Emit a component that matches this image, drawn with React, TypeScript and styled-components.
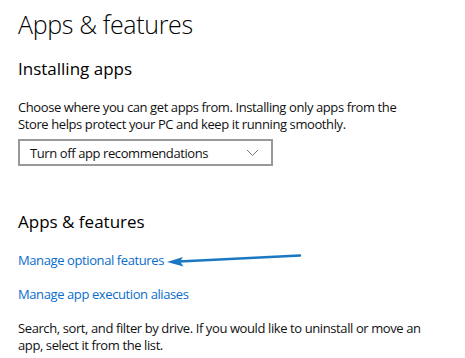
import styled, { createGlobalStyle } from "styled-components";

const GlobalStyle = createGlobalStyle`
    body {
        margin: 0;
        background: #ffffff;
        font-family: "Open Sans", "Noto Sans", sans-serif;
        color: #000000;
    }
`;

const Page = styled.div`
    position: relative;
    display: flex;
    flex-direction: column;
    align-items: flex-start;
    padding: 0 18px;
    width: 465px;
    height: 358px;
    box-sizing: border-box;
    overflow: hidden;
`;

const Title = styled.h1`
    margin: 8px 0 0;
    font-size: 25px;
    font-weight: 300;
    line-height: 32px;
    letter-spacing: -0.35px;
`;

const SectionTitle = styled.h2<{ $top: number }>`
    margin: ${({ $top }) => $top}px 0 0;
    font-size: 17px;
    font-weight: 400;
    line-height: 24px;
`;

const Text = styled.p<{ $top: number; $width: number }>`
    margin: ${({ $top }) => $top}px 0 0;
    font-size: 13px;
    line-height: 17px;
    letter-spacing: -0.4px;
    max-width: ${({ $width }) => $width}px;
    color: #111111;
`;

const Select = styled.div`
    display: flex;
    align-items: center;
    justify-content: space-between;
    margin-top: 6px;
    width: 255px;
    height: 27px;
    box-sizing: border-box;
    padding: 0 12px 0 10px;
    border: 2px solid #999999;
    font-size: 13px;
    letter-spacing: -0.4px;
    color: #111111;
`;

const LinkRow = styled.div<{ $top: number }>`
    position: relative;
    margin-top: ${({ $top }) => $top}px;
`;

const Link = styled.a`
    display: block;
    color: #0a6dcc;
    font-size: 13px;
    line-height: 17px;
    letter-spacing: -0.4px;
    text-decoration: none;
    cursor: pointer;
`;

const Arrow = styled.svg`
    position: absolute;
    left: 149px;
    top: 0;
`;

const Chevron = () => (
    <svg width="13" height="8" viewBox="0 0 13 8">
        <path d="M1 1 L6.5 6.5 L12 1" fill="none" stroke="#777" strokeWidth="1" />
    </svg>
);

const App = () => {
    return (
        <Page>
            <GlobalStyle />
            <Title>Apps &amp; features</Title>
            <SectionTitle $top={17}>Installing apps</SectionTitle>
            <Text $top={18} $width={400}>
                Choose where you can get apps from. Installing only apps from the Store helps protect your PC and keep it running smoothly.
            </Text>
            <Select>
                <span>Turn off app recommendations</span>
                <Chevron />
            </Select>
            <SectionTitle $top={44}>Apps &amp; features</SectionTitle>
            <LinkRow $top={18}>
                <Link>Manage optional features</Link>
                <Arrow width="136" height="18" viewBox="0 0 136 18">
                    <path d="M133 3.5 L12 9.5" stroke="#1a78c2" strokeWidth="2.5" fill="none" strokeLinecap="round" />
                    <path d="M0 10 L16 5 L13 9.6 L16.5 14.5 Z" fill="#1a78c2" />
                </Arrow>
            </LinkRow>
            <LinkRow $top={17}>
                <Link>Manage app execution aliases</Link>
            </LinkRow>
            <Text $top={17} $width={440}>
                Search, sort, and filter by drive. If you would like to uninstall or move an app, select it from the list.
            </Text>
        </Page>
    );
};

export default App;
